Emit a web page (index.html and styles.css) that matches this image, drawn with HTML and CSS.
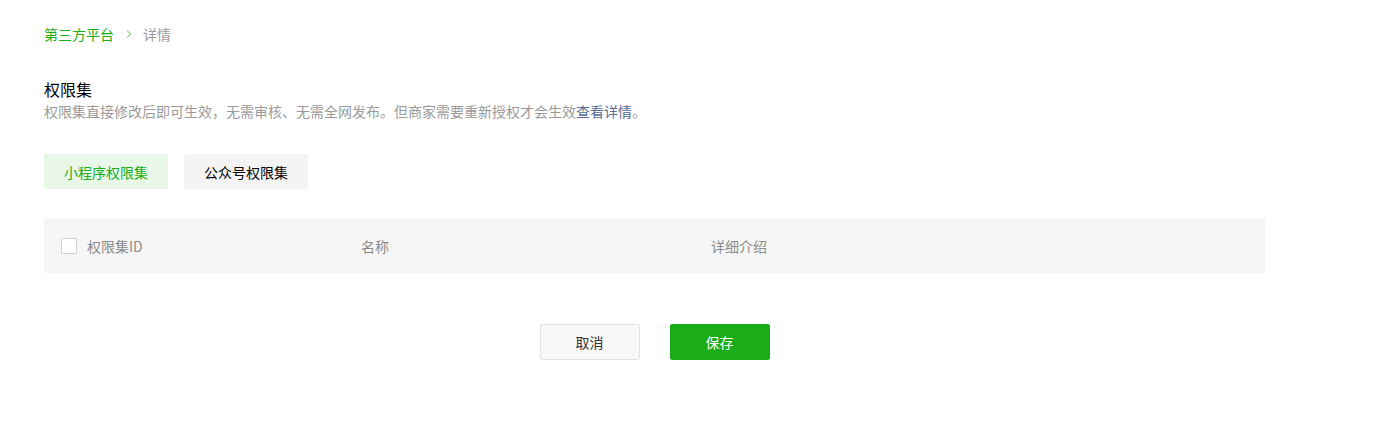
FILE: index.html
```html
<!DOCTYPE html>
<html lang="zh-CN">
<head>
  <meta charset="UTF-8">
  <title>权限集详情</title>
  <link rel="stylesheet" href="styles.css">
</head>
<body>
  <div class="page">
    <nav class="breadcrumb">
      <a class="crumb-link" href="#">第三方平台</a>
      <span class="crumb-sep">
        <svg width="8" height="10" viewBox="0 0 8 10"><path d="M2 1.5 L5.5 5 L2 8.5" fill="none" stroke="#9fd69e" stroke-width="1.4"/></svg>
      </span>
      <span class="crumb-current">详情</span>
    </nav>

    <section class="section-head">
      <h2 class="section-title">权限集</h2>
      <p class="section-desc">权限集直接修改后即可生效，无需审核、无需全网发布。但商家需要重新授权才会生效<a class="desc-link" href="#">查看详情</a>。</p>
    </section>

    <div class="tabs">
      <button class="tab tab-active">小程序权限集</button>
      <button class="tab">公众号权限集</button>
    </div>

    <div class="table">
      <div class="table-head">
        <div class="cell cell-id">
          <span class="checkbox"></span>
          <span>权限集ID</span>
        </div>
        <div class="cell cell-name">名称</div>
        <div class="cell cell-desc">详细介绍</div>
      </div>
    </div>

    <div class="actions">
      <button class="btn btn-default">取消</button>
      <button class="btn btn-primary">保存</button>
    </div>
  </div>
</body>
</html>
```

FILE: styles.css
```css
:root {
  --green: #1aad19;
  --green-light: #e8f7e8;
  --link: #576b95;
  --text: #353535;
  --text-gray: #9a9a9a;
  --text-head: #8a8a8a;
  --bg-gray: #f6f6f6;
}

* {
  margin: 0;
  padding: 0;
  box-sizing: border-box;
  font-family: "Noto Sans CJK SC", "Liberation Sans", sans-serif;
}

body {
  background: #fff;
  color: var(--text);
}

.page {
  width: 1221px;
  margin-left: 44px;
  padding-top: 24px;
}

.breadcrumb {
  display: flex;
  align-items: center;
  font-size: 14px;
  line-height: 20px;
}

.crumb-link {
  color: var(--green);
  text-decoration: none;
}

.crumb-sep {
  display: flex;
  align-items: center;
  margin: 0 10px 0 11px;
}

.crumb-current {
  color: var(--text-gray);
}

.section-head {
  margin-top: 33px;
}

.section-title {
  font-size: 16px;
  font-weight: normal;
  line-height: 24px;
  color: #000;
}

.section-desc {
  font-size: 14px;
  line-height: 20px;
  color: var(--text-gray);
}

.desc-link {
  color: var(--link);
  text-decoration: none;
}

.tabs {
  display: flex;
  gap: 16px;
  margin-top: 33px;
}

.tab {
  width: 124px;
  height: 35px;
  border: none;
  border-radius: 2px;
  background: #f4f4f4;
  color: #000;
  font-size: 14px;
  cursor: pointer;
}

.tab-active {
  background: var(--green-light);
  color: var(--green);
}

.table {
  margin-top: 29px;
}

.table-head {
  display: flex;
  align-items: center;
  height: 55px;
  background: var(--bg-gray);
  font-size: 14px;
  color: var(--text-head);
}

.cell {
  display: flex;
  align-items: center;
}

.cell-id {
  width: 317px;
  padding-left: 17px;
  gap: 10px;
}

.cell-name {
  width: 350px;
}

.cell-desc {
  flex: 1;
}

.checkbox {
  width: 16px;
  height: 16px;
  background: #fff;
  border: 1px solid #d2d2d2;
  border-radius: 1px;
}

.actions {
  display: flex;
  justify-content: center;
  gap: 30px;
  margin-top: 51px;
}

.btn {
  width: 100px;
  height: 36px;
  border-radius: 2px;
  font-size: 14px;
  cursor: pointer;
}

.btn-default {
  background: #f8f8f8;
  border: 1px solid #e2e2e2;
  color: var(--text);
}

.btn-primary {
  background: var(--green);
  border: 1px solid var(--green);
  color: #fff;
}
```
